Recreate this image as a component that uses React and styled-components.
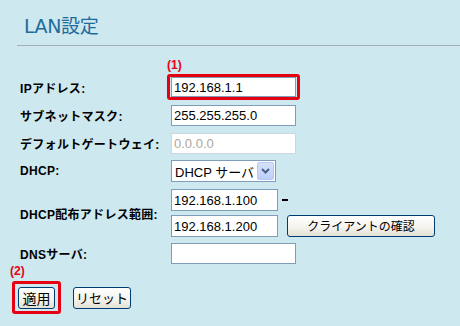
import React from 'react';
import styled, { createGlobalStyle } from 'styled-components';

const GlobalStyle = createGlobalStyle`
  html, body {
    margin: 0;
    padding: 0;
    background: #cde8ee;
  }
  body {
    font-family: "Liberation Sans", "Noto Sans CJK JP", sans-serif;
    color: #000;
  }
`;

const Page = styled.div`
  width: 460px;
  height: 326px;
  overflow: hidden;
  background: #cde8ee;
`;

const Header = styled.div`
  margin-left: 17px;
  padding: 16px 0 0 7px;
  height: 46px;
  box-sizing: border-box;
  border-bottom: 1px solid #a7b0b1;
`;

const Title = styled.h1`
  margin: 0;
  font-family: "DejaVu Sans", "Noto Sans CJK JP", sans-serif;
  font-weight: normal;
  font-size: 19px;
  line-height: 20px;
  color: #1f6b9c;
  letter-spacing: -0.4px;
`;

const Marker = styled.div`
  margin: ${(p) => p.$top}px 0 0 ${(p) => p.$left}px;
  height: 14px;
  font-family: "Liberation Sans", "Noto Sans CJK JP", sans-serif;
  font-size: 12px;
  font-weight: bold;
  line-height: 14px;
  color: #e60012;
`;

const Row = styled.div`
  display: flex;
  align-items: center;
  padding-left: 20px;
  margin-top: ${(p) => p.$top || 0}px;
`;

const Label = styled.div`
  width: 151px;
  flex: none;
  font-family: "Liberation Sans", "Noto Sans CJK JP", sans-serif;
  font-size: 12px;
  font-weight: bold;
  letter-spacing: 0.3px;
  white-space: nowrap;
`;

const Field = styled.div`
  display: flex;
  flex-direction: column;
  gap: 4px;
  margin-left: ${(p) => p.$shift || 0}px;
`;

const FieldLine = styled.div`
  display: flex;
  align-items: center;
`;

const Highlight = styled.div`
  display: inline-flex;
  border: 3px solid #e60012;
  border-radius: 3px;
  padding: ${(p) => p.$pad};
`;

const TextInput = styled.input`
  box-sizing: border-box;
  width: ${(p) => p.$w || 125}px;
  height: ${(p) => p.$h || 21}px;
  margin: 0;
  padding: 0 2px;
  border: 1px solid #7f9db9;
  background: #fff;
  font-family: "Liberation Sans", "Noto Sans CJK JP", sans-serif;
  font-size: 13px;
  color: #000;
  outline: none;

  &:disabled {
    color: #aca899;
    background: #fff;
    border-color: #c9d7e3;
  }
`;

const SelectBox = styled.div`
  box-sizing: border-box;
  width: 105px;
  height: 22px;
  display: flex;
  align-items: center;
  justify-content: space-between;
  border: 1px solid #7f9db9;
  background: #fff;
  padding: 0 1px 0 3px;
  font-family: "Liberation Sans", "Noto Sans CJK JP", sans-serif;
  font-size: 13px;
`;

const ArrowButton = styled.span`
  box-sizing: border-box;
  width: 17px;
  height: 18px;
  display: flex;
  align-items: center;
  justify-content: center;
  background: linear-gradient(180deg, #d5e1fc 0%, #bccffa 100%);
  border: 1px solid #b6c9f3;
  border-radius: 2px;
`;

const Dash = styled.span`
  margin-left: 4px;
  width: 6px;
  height: 2px;
  background: #000;
`;

const Button = styled.button`
  box-sizing: border-box;
  width: ${(p) => p.$w}px;
  height: 22px;
  margin: 0 0 0 ${(p) => p.$gap || 0}px;
  padding: 0;
  border: 1px solid #003c74;
  border-radius: 3px;
  background: linear-gradient(180deg, #ffffff 0%, #f5f4ef 55%, #e4e0d4 100%);
  font-family: "Noto Sans CJK JP", sans-serif;
  font-size: ${(p) => p.$fs || 12}px;
  line-height: 20px;
  color: #000;
`;

const ButtonRow = styled.div`
  display: flex;
  align-items: center;
  padding-left: 12px;
  margin-top: 3px;
`;

function Chevron() {
  return (
    <svg width="9" height="6" viewBox="0 0 9 6">
      <path d="M1 1 L4.5 4.5 L8 1" fill="none" stroke="#4d6185" strokeWidth="2" />
    </svg>
  );
}

export default function App() {
  return (
    <Page>
      <GlobalStyle />
      <Header>
        <Title>LAN設定</Title>
      </Header>

      <Marker $top={12} $left={167}>(1)</Marker>

      <Row $top={2}>
        <Label>IPアドレス:</Label>
        <Field $shift={-4}>
          <Highlight $pad="0 1px">
            <TextInput $h={20} defaultValue="192.168.1.1" />
          </Highlight>
        </Field>
      </Row>

      <Row $top={5}>
        <Label>サブネットマスク:</Label>
        <TextInput defaultValue="255.255.255.0" />
      </Row>

      <Row $top={7}>
        <Label>デフォルトゲートウェイ:</Label>
        <TextInput disabled defaultValue="0.0.0.0" />
      </Row>

      <Row $top={6}>
        <Label>DHCP:</Label>
        <SelectBox>
          <span>DHCP サーバ</span>
          <ArrowButton>
            <Chevron />
          </ArrowButton>
        </SelectBox>
      </Row>

      <Row $top={7}>
        <Label>DHCP配布アドレス範囲:</Label>
        <Field>
          <FieldLine>
            <TextInput $w={107} $h={22} defaultValue="192.168.1.100" />
            <Dash />
          </FieldLine>
          <FieldLine>
            <TextInput $w={107} $h={22} defaultValue="192.168.1.200" />
            <Button $w={148} $gap={9}>クライアントの確認</Button>
          </FieldLine>
        </Field>
      </Row>

      <Row $top={6}>
        <Label>DNSサーバ:</Label>
        <TextInput />
      </Row>

      <Marker $top={0} $left={10}>(2)</Marker>

      <ButtonRow>
        <Highlight $pad="3px 3px 2px">
          <Button $w={37} $fs={14}>適用</Button>
        </Highlight>
        <Button $w={58} $gap={12} $fs={13}>リセット</Button>
      </ButtonRow>
    </Page>
  );
}
